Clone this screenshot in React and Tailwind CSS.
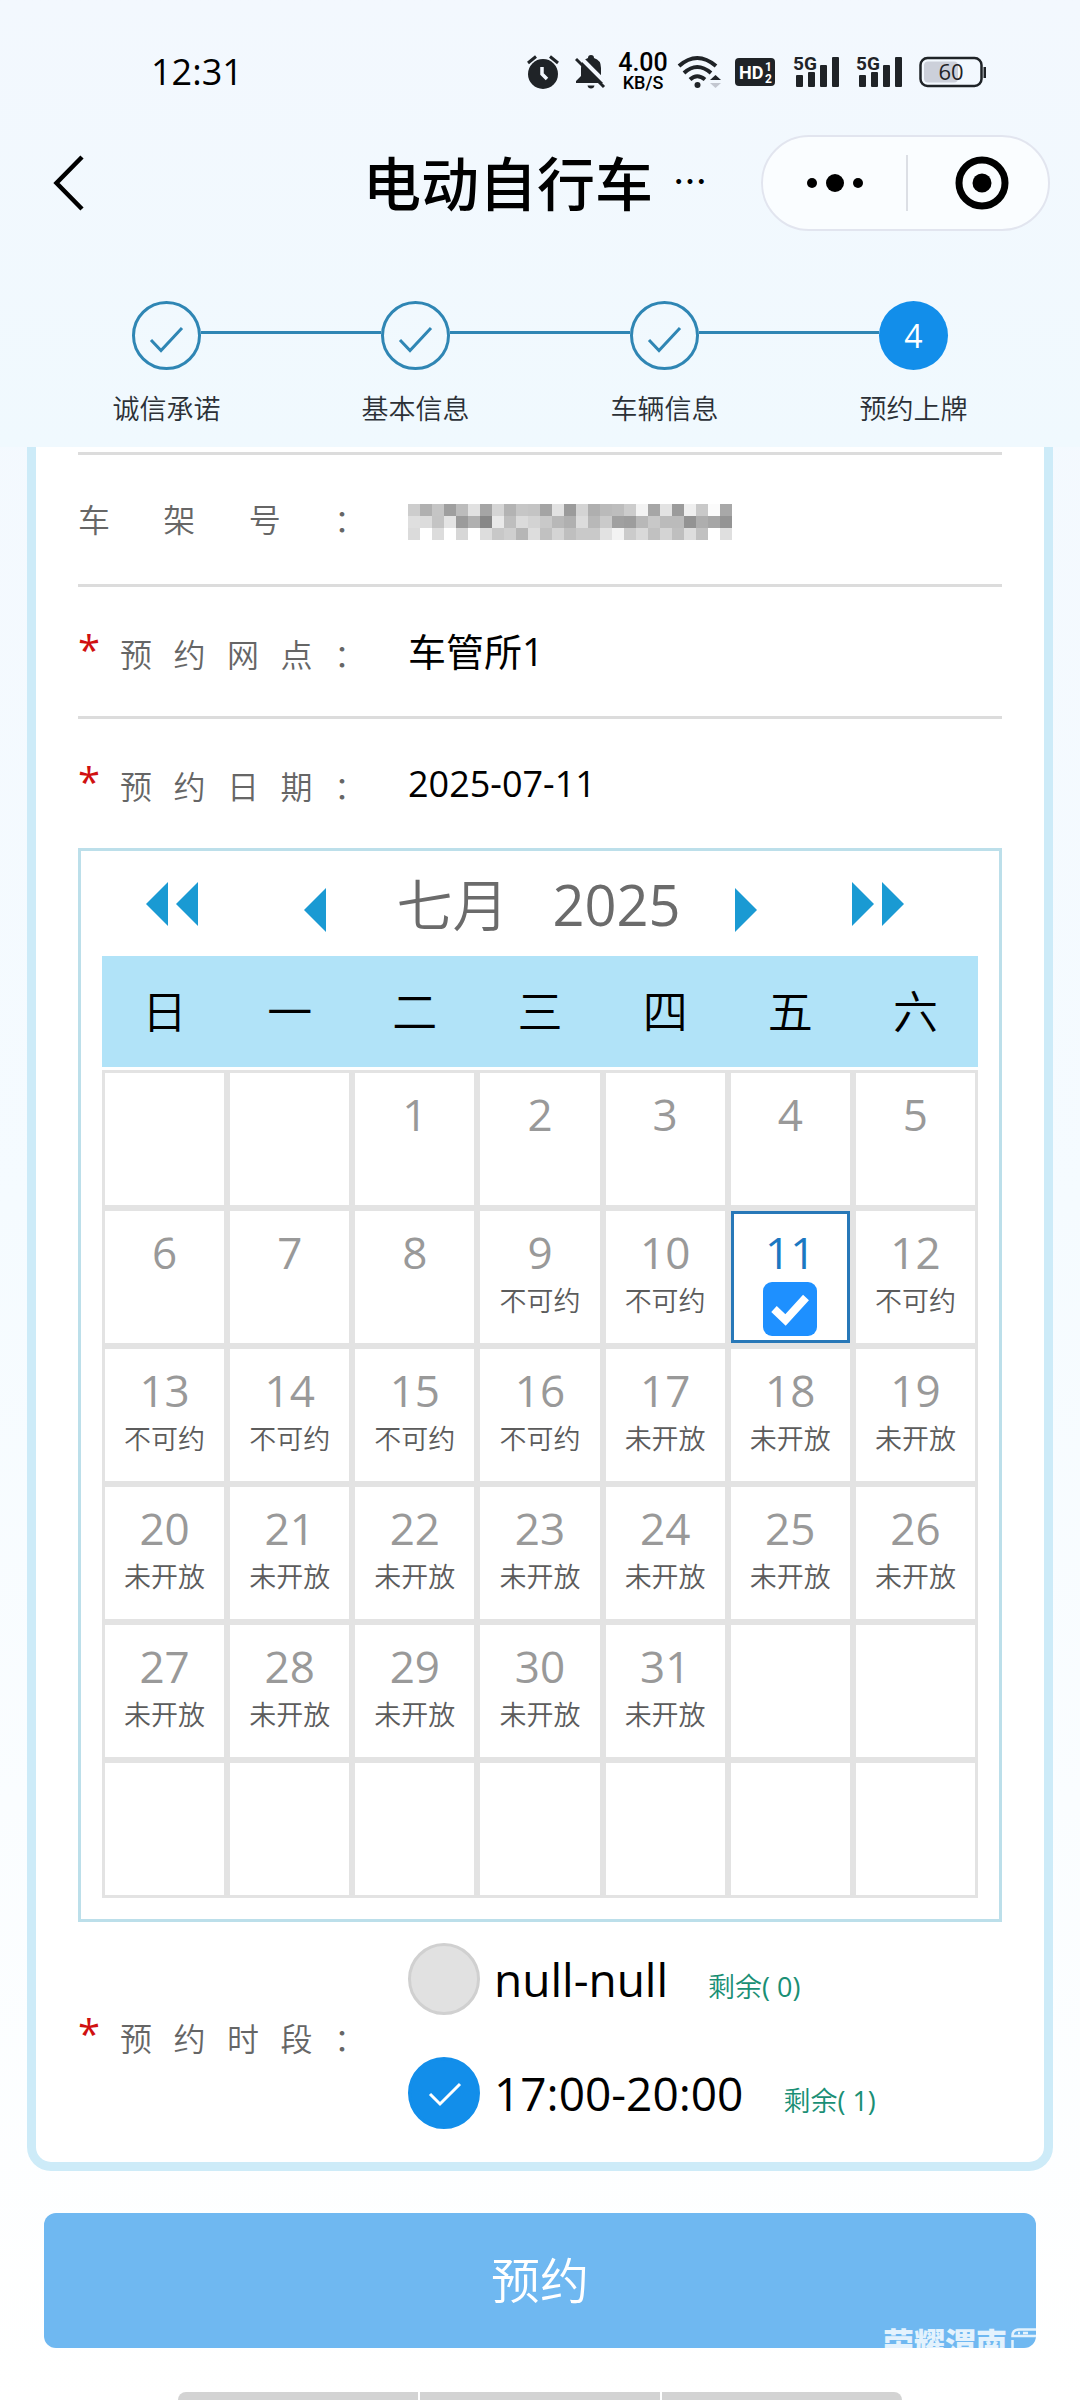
import { useState } from 'react';

const steps = ['诚信承诺', '基本信息', '车辆信息', '预约上牌'];
const weekdays = ['日', '一', '二', '三', '四', '五', '六'];
const FIRST_WEEKDAY = 2;
const DAYS_IN_MONTH = 31;

// Valeurs de gris du numéro de cadre masqué
const mosaic = [
  'cd b0 c5 9f bc e1 a5 d5 b3 c6 c4 a4 e2 9b d4 af ba bd cc f3 a6 e3 9b ef c9 fb a8',
  'df dc c4 e4 9b b0 87 e9 be db d3 c9 b8 b0 dc b8 ca a0 9d b8 c8 bb bb 93 ae a6 94',
  'db ff dc ff d7 ff dd c8 cf b6 dd c1 d4 bf c9 c9 e2 f3 cb d9 c1 d4 bf dd c1 ff df',
].map((row) => row.split(' '));

const slots = [
  { id: 'slot-0', time: 'null-null', left: 0 },
  { id: 'slot-1', time: '17:00-20:00', left: 1 },
];

const statusOf = (day) => {
  if (day < 9 || day === 11) return '';
  return day < 17 ? '不可约' : '未开放';
};

const weeks = Array.from({ length: 6 }, (_, w) =>
  Array.from({ length: 7 }, (_, d) => {
    const day = w * 7 + d - FIRST_WEEKDAY + 1;
    return day >= 1 && day <= DAYS_IN_MONTH ? day : null;
  })
);

const Signal = () => (
  <svg viewBox="0 0 47 34" className="h-[34px] w-[47px] overflow-visible" fill="#1f2327" aria-hidden="true">
    <text x="0" y="15" fontSize="19" fontWeight="700" fontFamily="Roboto, sans-serif">5G</text>
    <rect x="3" y="20" width="7" height="12" rx="1" />
    <rect x="15" y="17" width="7" height="15" rx="1" />
    <rect x="27" y="10" width="7" height="22" rx="1" />
    <rect x="39" y="2" width="7" height="30" rx="1" />
  </svg>
);

const StatusBar = () => (
  <div className="flex h-36 items-center justify-between pl-[151px] pr-[93px]">
    <span className="text-[36px] font-medium">12:31</span>
    <div className="flex items-center">
      <svg viewBox="0 0 32 34" className="mr-4 h-[34px] w-8" fill="#1f2327" aria-hidden="true">
        <circle cx="16" cy="19" r="15" />
        <path d="M1 8 L9 1.500 M31 8 L23 1.500" stroke="#1f2327" strokeWidth="3" />
        <path d="M15 12 V19 L20 24" stroke="#f3f8fe" strokeWidth="3.500" fill="none" />
      </svg>
      <svg viewBox="0 0 32 36" className="mr-2.5 h-9 w-8" fill="#1f2327" aria-hidden="true">
        <path d="M13 4 Q13 1 16 1 Q19 1 19 4 Q26 6 26 14 V22 L31 27 V29 H1 V27 L6 22 V14 Q6 6 13 4 Z" />
        <path d="M12.500 31.500 H19.500 Q19 34.500 16 34.500 Q13 34.500 12.500 31.500 Z" />
        <path d="M4 2 L33 31" stroke="#f3f8fe" strokeWidth="4" />
        <path d="M1 5 L29 33" stroke="#1f2327" strokeWidth="3" />
      </svg>
      <div className="mr-2 flex w-[52px] flex-col items-center font-['Roboto',sans-serif] font-medium">
        <span className="text-[25px] leading-[22px]">4.00</span>
        <span className="text-[18px] leading-[18px]">KB/S</span>
      </div>
      <svg viewBox="0 0 46 34" className="mr-3 h-[34px] w-[46px]" fill="none" stroke="#1f2327" strokeWidth="4" aria-hidden="true">
        <path d="M2 11 Q20 -5 39 11" />
        <path d="M7 18 Q20 6 34 18" />
        <path d="M13 24.500 Q20 18 28 24.500" />
        <circle cx="20.500" cy="30" r="3" fill="#1f2327" stroke="none" />
        <path d="M33 25 L38.500 20 L44 25 Z" fill="#1f2327" stroke="none" />
        <path d="M33 28 L38.500 33 L44 28 Z" fill="#c3c7d0" stroke="none" />
      </svg>
      <svg viewBox="0 0 40 28" className="mr-[18px] h-7 w-10 overflow-visible" aria-hidden="true">
        <rect width="40" height="28" rx="4" fill="#1f2327" />
        <g fill="#fff" fontWeight="700" fontFamily="Roboto, sans-serif">
          <text x="4" y="21" fontSize="18">HD</text>
          <text x="30" y="13" fontSize="12">1</text>
          <text x="30" y="25" fontSize="12">2</text>
        </g>
      </svg>
      <Signal />
      <div className="w-4" />
      <Signal />
      <svg viewBox="0 0 68 32" className="ml-4 h-8 w-[68px] overflow-visible" aria-hidden="true">
        <rect x="1.500" y="2" width="61" height="28" rx="7" fill="none" stroke="#1f2327" strokeWidth="2.500" />
        <rect x="5" y="5.500" width="34" height="21" rx="4" fill="#ccd0da" />
        <rect x="64.500" y="11" width="2.500" height="11" fill="#1f2327" />
        <text x="32" y="24" fontSize="22" fontWeight="400" textAnchor="middle" fill="#1f2327" fontFamily="Open Sans, sans-serif">60</text>
      </svg>
    </div>
  </div>
);

const NavBar = () => (
  <div className="flex h-[78px] items-center justify-between pl-[52px] pr-[30px]">
    <button type="button" aria-label="返回">
      <svg viewBox="0 0 32 56" className="h-14 w-8" fill="none" stroke="#000" strokeWidth="4.500">
        <path d="M30 2 L4.500 28 L30 54" />
      </svg>
    </button>
    <h1 className="ml-[279px] flex items-center gap-5 whitespace-nowrap pb-1 font-['Noto_Sans_CJK_SC',sans-serif] text-[58px] font-medium leading-none">
      电动自行车
      <span className="text-[34px]">…</span>
    </h1>
    <div className="ml-auto flex h-24 w-[289px] items-center rounded-full border-2 border-[#e2e5ef] bg-[#fafdff]">
      <button type="button" aria-label="更多" className="flex h-14 w-[145px] items-center justify-center border-r-2 border-[#dcdfe5]">
        <svg viewBox="0 0 56 20" className="h-5 w-14">
          <circle cx="5" cy="10" r="5" />
          <circle cx="28" cy="10" r="9" />
          <circle cx="51" cy="10" r="5" />
        </svg>
      </button>
      <button type="button" aria-label="关闭" className="flex flex-1 items-center justify-center pl-2">
        <svg viewBox="0 0 54 54" className="h-[54px] w-[54px]">
          <circle cx="27" cy="27" r="23" fill="none" stroke="#000" strokeWidth="7" />
          <circle cx="27" cy="27" r="9.500" />
        </svg>
      </button>
    </div>
  </div>
);

const Stepper = () => (
  <ol className="grid grid-cols-4 px-[42px] pt-[79px] pb-[18px]">
    {steps.map((label, i) => {
      const current = i === steps.length - 1;
      return (
        <li key={label} className="flex flex-col items-center">
          <div className="flex w-full items-center">
            <div className={`mb-1.5 h-[3px] flex-1 ${i === 0 ? '' : 'bg-[#2f86b4]'}`} />
            <div
              className={`flex h-[69px] w-[69px] items-center justify-center rounded-full text-[32px] ${
                current ? 'bg-[#128eea] font-normal text-white' : 'border-3 border-[#2f86b4]'
              }`}
            >
              {current ? (
                i + 1
              ) : (
                <svg viewBox="0 0 36 28" className="mt-2 h-7 w-9" fill="none" stroke="#2f86b4" strokeWidth="3">
                  <path d="M2 14 L12 24.500 L33 2" />
                </svg>
              )}
            </div>
            <div className={`mb-1.5 h-[3px] flex-1 ${current ? '' : 'bg-[#2f86b4]'}`} />
          </div>
          <span className="mt-[19px] text-[27px] leading-[40px] text-[#2b3036]">{label}</span>
        </li>
      );
    })}
  </ol>
);

const FieldLabel = ({ htmlFor, required, children }) => (
  <label htmlFor={htmlFor} className="flex w-[288px] items-center text-[32px] text-[#666]">
    {required && <span className="w-[42px] pb-1 text-[40px] leading-[44px] font-normal text-[#d01010]">*</span>}
    <span className={`flex flex-1 justify-between ${required ? 'pt-1.5' : ''}`}>
      {children.split('').map((c, i) => (
        <span key={i}>{c}</span>
      ))}
    </span>
  </label>
);

const Arrows = ({ label, right, double, className }) => (
  <button type="button" aria-label={label} className={className}>
    <svg viewBox="0 0 52 44" className={`h-11 w-[52px] ${right ? 'rotate-180' : ''}`} fill="#1a9ad3">
      {double ? (
        <>
          <path d="M22 0 V44 L0 22 Z" />
          <path d="M52 0 V44 L30 22 Z" />
        </>
      ) : (
        <path d="M37 0 V44 L15 22 Z" />
      )}
    </svg>
  </button>
);

const Calendar = ({ selected, onSelect }) => (
  <div className="border-3 border-[#bcdfea] px-[21px] pb-[21px]">
    <div className="flex h-[105px] items-center justify-between pl-[44px] pr-[74px] text-[56px] text-[#6b6b6b]">
      <div className="flex items-center gap-[91px]">
        <Arrows label="上一年" double />
        <Arrows label="上一月" className="mt-3" />
      </div>
      <span className="whitespace-nowrap pl-4">
        七月<span className="ml-11 font-normal">2025</span>
      </span>
      <div className="flex items-center gap-20">
        <Arrows label="下一月" right className="mt-3" />
        <Arrows label="下一年" right double />
      </div>
    </div>
    <table className="w-full table-fixed border-separate border-spacing-0">
      <thead>
        <tr>
          {weekdays.map((d) => (
            <th key={d} className="h-[111px] bg-[#b1e3f8] p-0 text-[45px] font-[350] text-black">{d}</th>
          ))}
        </tr>
        <tr><td className="h-[3px] p-0" colSpan={7} /></tr>
      </thead>
      <tbody>
        {weeks.map((week, w) => (
          <tr key={w}>
            {week.map((day, d) => (
              <td key={d} className="h-[138px] border-3 border-[#e3e3e3] p-0 align-top">
                {day && (
                  <button
                    type="button"
                    onClick={() => onSelect(day)}
                    className={`flex h-[132px] w-full flex-col items-center gap-0.5 border-3 pt-2.5 ${
                      day === selected ? 'border-[#2878b8] text-[#1b78c2]' : 'border-transparent text-[#999]'
                    }`}
                  >
                    <span className="text-[44px] leading-[56px] font-normal">{day}</span>
                    {day === selected ? (
                      <svg viewBox="0 0 54 54" className="h-[54px] w-[54px] shrink-0">
                        <rect width="54" height="54" rx="9" fill="#1e90ff" />
                        <path d="M11 27 L22.500 38 L43 15.500" fill="none" stroke="#fff" strokeWidth="8" strokeLinejoin="miter" />
                      </svg>
                    ) : (
                      <span className="text-[27px] leading-[38px] text-[#5c5c5c]">{statusOf(day)}</span>
                    )}
                  </button>
                )}
              </td>
            ))}
          </tr>
        ))}
      </tbody>
    </table>
  </div>
);

const App = () => {
  const [selected, setSelected] = useState(11);
  const [slot, setSlot] = useState('slot-1');

  return (
    <div className="flex min-h-screen flex-col bg-linear-to-b from-[#f3f8fe] via-[#f5fbff] to-white font-['Open_Sans','Noto_Sans_CJK_SC',sans-serif] font-[350] text-black">
      <header className="bg-linear-to-b from-[#f3f8fe] to-[#f0f9fe]">
        <StatusBar />
        <NavBar />
        <Stepper />
      </header>

      <form className="flex flex-1 flex-col" onSubmit={(e) => e.preventDefault()}>
        <div className="mx-[27px] rounded-b-3xl border-x-9 border-b-9 border-[#cdebf8] bg-white px-[42px] pt-[5px] pb-[33px]">
          {/* Numéro de cadre */}
          <div className="flex h-[132px] items-center border-t-3 border-[#dcdcdc]">
            <FieldLabel>车架号：</FieldLabel>
            <svg viewBox="0 0 324 36" className="ml-[42px] mt-1 h-9 w-[324px]" shapeRendering="crispEdges" role="img" aria-label="车架号">
              {mosaic.map((row, y) =>
                row.map((g, x) => (
                  <rect key={`${y}-${x}`} x={x * 12} y={y * 12} width="12" height="12" fill={`#${g}${g}${g}`} />
                ))
              )}
            </svg>
          </div>

          {/* Point de rendez-vous */}
          <div className="flex h-[135px] items-center border-y-3 border-[#dcdcdc]">
            <FieldLabel htmlFor="site" required>预约网点：</FieldLabel>
            <input id="site" readOnly defaultValue="车管所1" className="ml-[42px] min-w-0 flex-1 text-[38px] font-normal outline-none" />
          </div>

          {/* Date */}
          <div className="flex h-[129px] items-center">
            <FieldLabel htmlFor="date" required>预约日期：</FieldLabel>
            <input
              id="date"
              readOnly
              value={`2025-07-${String(selected).padStart(2, '0')}`}
              className="ml-[42px] min-w-0 flex-1 text-[36px] font-normal outline-none"
            />
          </div>
          <Calendar selected={selected} onSelect={setSelected} />

          {/* Créneaux */}
          <div className="flex items-center pt-[21px]">
            <FieldLabel required>预约时段：</FieldLabel>
            <div className="ml-[42px] flex flex-col gap-[42px]">
              {slots.map((s) => (
                <label key={s.id} htmlFor={s.id} className="flex h-[72px] items-center">
                  <span className="relative h-[72px] w-[72px]">
                    <input
                      id={s.id}
                      type="radio"
                      name="slot"
                      checked={slot === s.id}
                      onChange={() => setSlot(s.id)}
                      className="block h-[72px] w-[72px] appearance-none rounded-full border-3 border-[#d0d0d0] bg-[#e1e1e1] checked:border-[#128eea] checked:bg-[#128eea]"
                    />
                    {slot === s.id && (
                      <svg viewBox="0 0 72 72" className="pointer-events-none absolute inset-0" fill="none" stroke="#fff" strokeWidth="3">
                        <path d="M22 37 L32 47 L52 27" />
                      </svg>
                    )}
                  </span>
                  <span className="ml-3.5 text-[46px] font-normal">{s.time}</span>
                  <span className="ml-10 mt-4 text-[27px] text-[#1a8f75]">
                    剩余<span className="font-normal">( {s.left})</span>
                  </span>
                </label>
              ))}
            </div>
          </div>
        </div>

        <button
          type="submit"
          className="relative mx-11 mt-[42px] h-[135px] overflow-hidden rounded-xl bg-[#6fb8f1] text-[49px] text-white"
        >
          预约
          <span className="absolute right-0 top-[113px] flex items-start gap-1 text-[#e3f2fd]" aria-hidden="true">
            <span className="text-[31px] font-black leading-[34px]">荣耀渭南</span>
            <svg viewBox="0 0 25 30" className="mt-0.5 h-[30px] w-[25px]" fill="none" stroke="#e3f2fd" strokeWidth="2.500">
              <path d="M25 1.500 H8 Q1.500 1.500 1.500 8 H25 M1.500 12 V30 M7 5 H9 M12 5 H17" />
            </svg>
          </span>
        </button>

        <div className="mt-auto flex justify-center gap-0.5 px-[178px]">
          <div className="h-2 flex-1 rounded-tl-lg bg-[#d3d3d3]" />
          <div className="h-2 flex-1 bg-[#d3d3d3]" />
          <div className="h-2 flex-1 rounded-tr-lg bg-[#d3d3d3]" />
        </div>
      </form>
    </div>
  );
};

export default App;
